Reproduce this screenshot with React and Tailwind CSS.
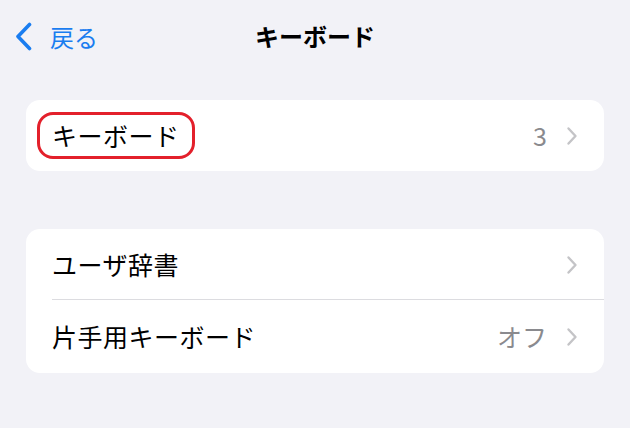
import React from 'react';

const FONT = { fontFamily: "'Noto Sans CJK JP', 'Noto Sans', sans-serif" };

function Chevron() {
  return (
    <svg width="12" height="20" viewBox="0 0 12 20" className="shrink-0">
      <path d="M2.5 2.5 L9.5 10 L2.5 17.5" fill="none" stroke="#c4c4c7" strokeWidth="2.4" strokeLinecap="round" strokeLinejoin="round" />
    </svg>
  );
}

function Row({ label, value, circled, divider, h = 'h-[71px]' }) {
  return (
    <div className={`relative flex items-center ${h} pl-[26px] pr-[26px]`}>
      <span className="relative text-[25px] leading-none text-black tracking-[0.5px]">
        {label}
        {circled && (
          <span className="absolute -left-[15px] -right-[15px] -top-[11px] -bottom-[11px] border-[3px] border-[#e3202b] rounded-[16px]" />
        )}
      </span>
      <div className="ml-auto flex items-center gap-[19px]">
        {value && <span className="text-[25px] leading-none text-[#8a8a8e]">{value}</span>}
        <Chevron />
      </div>
      {divider && <div className="absolute left-[26px] right-0 bottom-0 h-px bg-[#dcdce0]" />}
    </div>
  );
}

export default function App() {
  return (
    <div className="w-[630px] h-[428px] bg-[#f2f2f7] overflow-hidden" style={FONT}>
      <header className="relative h-[72px] flex items-center justify-center">
        <div className="absolute left-[14px] top-[22px] flex items-center gap-[17px]">
          <svg width="19" height="29" viewBox="0 0 19 29">
            <path d="M15.5 2.5 L4 14.5 L15.5 26.5" fill="none" stroke="#1a7df0" strokeWidth="3.6" strokeLinecap="round" strokeLinejoin="round" />
          </svg>
          <span className="text-[24px] leading-none text-[#1a7df0]">戻る</span>
        </div>
        <h1 className="text-[24px] font-bold leading-none text-black">キーボード</h1>
      </header>

      <div className="px-[26px] pt-[28px] flex flex-col gap-[58px]">
        <div className="bg-white rounded-[14px]">
          <Row label="キーボード" value="3" circled />
        </div>
        <div className="bg-white rounded-[14px] overflow-hidden">
          <Row label="ユーザ辞書" divider />
          <Row label="片手用キーボード" value="オフ" h="h-[73px]" />
        </div>
      </div>
    </div>
  );
}
